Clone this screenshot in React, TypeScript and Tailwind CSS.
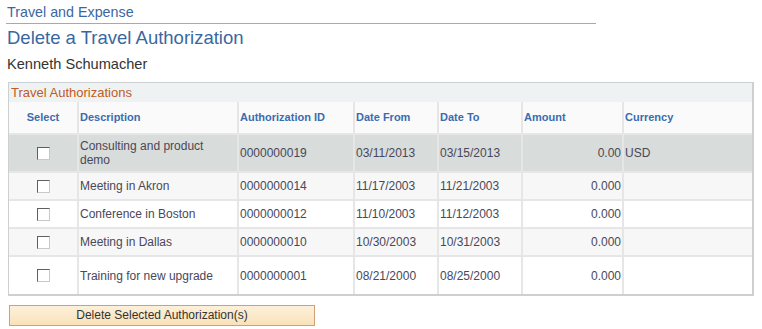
const ROWS = [
  { desc: ["Consulting and product", "demo"], id: "0000000019", from: "03/11/2013", to: "03/15/2013", amount: "0.00", currency: "USD", h: "h-[38px]", bg: "bg-[#d8dcda]" },
  { desc: ["Meeting in Akron"], id: "0000000014", from: "11/17/2003", to: "11/21/2003", amount: "0.000", currency: "", h: "h-[28px]", bg: "bg-[#f7f7f7]" },
  { desc: ["Conference in Boston"], id: "0000000012", from: "11/10/2003", to: "11/12/2003", amount: "0.000", currency: "", h: "h-[28px]", bg: "bg-white" },
  { desc: ["Meeting in Dallas"], id: "0000000010", from: "10/30/2003", to: "10/31/2003", amount: "0.000", currency: "", h: "h-[28px]", bg: "bg-[#f7f7f7]" },
  { desc: ["Training for new upgrade"], id: "0000000001", from: "08/21/2000", to: "08/25/2000", amount: "0.000", currency: "", h: "h-[38px]", bg: "bg-white" },
];

function Checkbox() {
  return (
    <div className="mx-auto w-[13px] h-[13px] border border-t-[#5f5f5f] border-l-[#5f5f5f] border-r-[#c8c8c8] border-b-[#c8c8c8] bg-white" />
  );
}

const th = "border-2 border-[#e6e6e6] px-[1px] text-left align-middle text-[11px] font-bold text-[#3a6cb0]";
const td = "border-2 border-[#e6e6e6] px-[1px] align-middle text-[12px] text-[#48485a]";

export default function App() {
  return (
    <div className="w-[762px] h-[329px] bg-white font-['Liberation_Sans',Arial,sans-serif] overflow-hidden">
      <div className="ml-[6px] w-[590px] h-[24px] border-b border-[#a9a9a9] pt-[3px] pl-px text-[14.3px] leading-[18px] text-[#3b67a0]">
        Travel and Expense
      </div>
      <h1 className="mt-[3px] ml-[7px] text-[18.5px] leading-[22px] text-[#3b67a0]">Delete a Travel Authorization</h1>
      <div className="mt-[6px] ml-[7px] text-[14.6px] leading-[18px] text-[#333]">Kenneth Schumacher</div>

      <div className="mt-[9px] ml-[8px] w-[746px] border border-[#cdd0d2] border-r-2 border-b-2">
        <div className="h-[19px] bg-[#eff2f3] pl-[2px] text-[13px] leading-[19px] text-[#bf5b22]">Travel Authorizations</div>
        <table className="w-full table-fixed border-collapse bg-[#fafafa]">
          <colgroup>
            <col className="w-[69px]" />
            <col className="w-[160px]" />
            <col className="w-[116px]" />
            <col className="w-[84px]" />
            <col className="w-[84px]" />
            <col className="w-[101px]" />
            <col className="w-[129px]" />
          </colgroup>
          <thead>
            <tr className="h-[32px]">
              <th className={`${th} !text-center border-l-0 border-t-0`}>Select</th>
              <th className={`${th} border-t-0`}>Description</th>
              <th className={`${th} border-t-0`}>Authorization ID</th>
              <th className={`${th} border-t-0`}>Date From</th>
              <th className={`${th} border-t-0`}>Date To</th>
              <th className={`${th} border-t-0`}>Amount</th>
              <th className={`${th} border-t-0 border-r-0`}>Currency</th>
            </tr>
          </thead>
          <tbody>
            {ROWS.map((r, i) => {
              const last = i === ROWS.length - 1 ? "border-b-0" : "";
              return (
                <tr key={r.id} className={`${r.h} ${r.bg}`}>
                  <td className={`${td} border-l-0 ${last}`}>
                    <Checkbox />
                  </td>
                  <td className={`${td} leading-[14px] ${last}`}>
                    {r.desc.map((d, j) => (
                      <div key={j}>{d}</div>
                    ))}
                  </td>
                  <td className={`${td} ${last}`}>{r.id}</td>
                  <td className={`${td} ${last}`}>{r.from}</td>
                  <td className={`${td} ${last}`}>{r.to}</td>
                  <td className={`${td} text-right ${last}`}>{r.amount}</td>
                  <td className={`${td} border-r-0 ${last}`}>{r.currency}</td>
                </tr>
              );
            })}
          </tbody>
        </table>
      </div>

      <button className="mt-[9px] ml-[9px] w-[306px] h-[21px] border border-[#d2a172] bg-gradient-to-b from-[#fdf0da] to-[#f9e2ba] text-[12px] leading-[19px] text-[#333]">
        Delete Selected Authorization(s)
      </button>
    </div>
  );
}
